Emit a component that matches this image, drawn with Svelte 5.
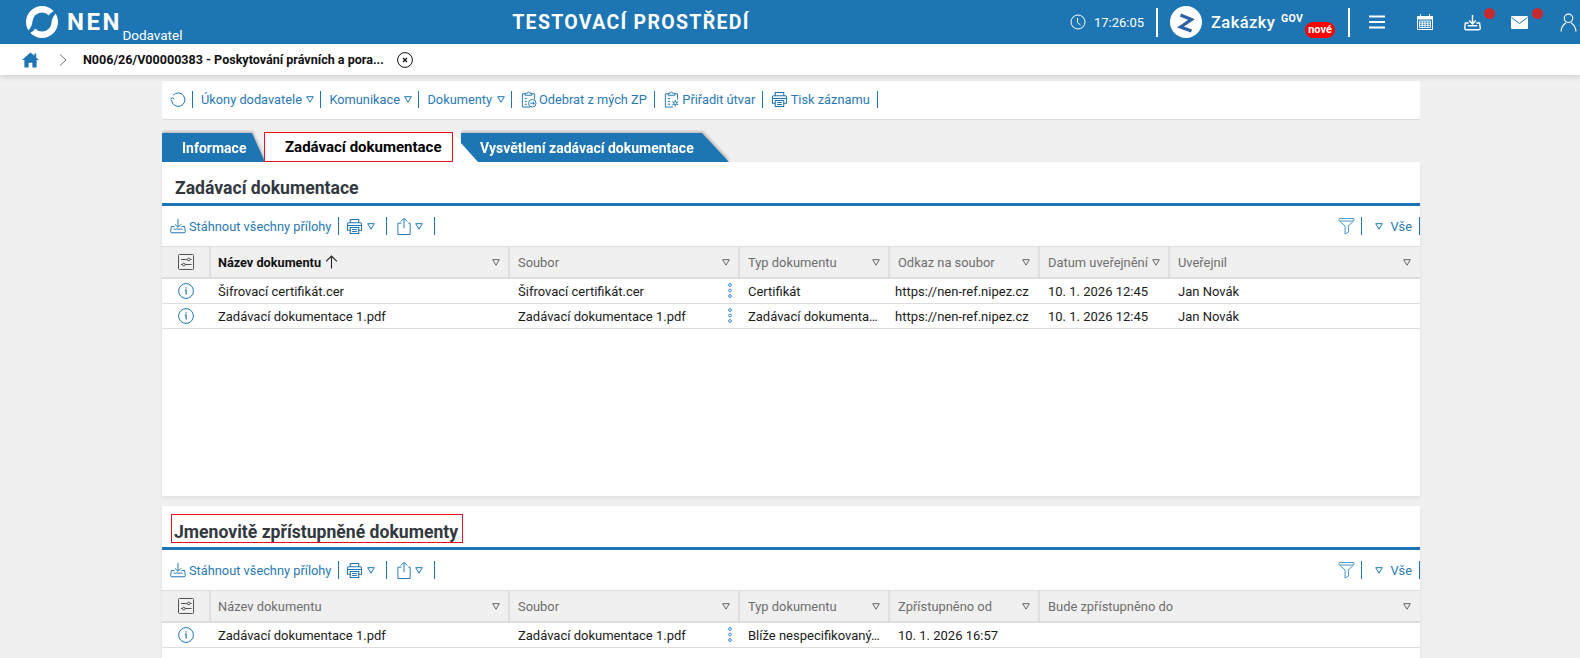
<script>
  const table1 = {
    cols: '47px 300px 230px 150px 150px 130px 1fr',
    head: ['Název dokumentu', 'Soubor', 'Typ dokumentu', 'Odkaz na soubor', 'Datum uveřejnění', 'Uveřejnil'],
    rows: [
      ['Šifrovací certifikát.cer', 'Šifrovací certifikát.cer', 'Certifikát', 'https://nen-ref.nipez.cz', '10. 1. 2026 12:45', 'Jan Novák'],
      ['Zadávací dokumentace 1.pdf', 'Zadávací dokumentace 1.pdf', 'Zadávací dokumenta…', 'https://nen-ref.nipez.cz', '10. 1. 2026 12:45', 'Jan Novák']
    ],
    sorted: true
  };
  const table2 = {
    cols: '47px 300px 230px 150px 150px 1fr',
    head: ['Název dokumentu', 'Soubor', 'Typ dokumentu', 'Zpřístupněno od', 'Bude zpřístupněno do'],
    rows: [
      ['Zadávací dokumentace 1.pdf', 'Zadávací dokumentace 1.pdf', 'Blíže nespecifikovaný…', '10. 1. 2026 16:57', '']
    ],
    sorted: false
  };
</script>

{#snippet tri()}
  <svg class="tri" viewBox="0 0 8 7" width="8" height="7"><path d="M.7.7h6.6L4 6.2z" fill="none" stroke="currentColor" stroke-width="1"/></svg>
{/snippet}

{#snippet printer(s = 17)}
  <svg viewBox="0 0 18 18" width={s} height={s} fill="none" stroke="#1d75b3" stroke-width="1.1"><path d="M4.5 5V1.5h9V5M4.5 13H1.5V6.5a1.500 1.500 0 0 1 1.500-1.500h12a1.500 1.500 0 0 1 1.500 1.500V13h-3"/><path d="M4.5 10h9v6.500h-9zM1.500 8h15M6.500 12.200h5M6.500 14.400h5"/></svg>
{/snippet}

{#snippet download(color = '#1d75b3', w = 1.1, s = 17)}
  <svg viewBox="0 0 18 18" width={s} height={s} fill="none" stroke={color} stroke-width={w}><path d="M9 1v9M5.500 7 9 10.500 12.500 7"/><path d="M5 9.500H1.500L.8 15a1.500 1.500 0 0 0 1.500 1.600h13.400a1.500 1.500 0 0 0 1.500-1.600l-.7-5.500H13M4 12.500h10"/></svg>
{/snippet}

{#snippet clipboard(kind)}
  <svg viewBox="0 0 18 18" width="17" height="17" fill="none" stroke="#1d75b3" stroke-width="1"><path d="M5.500 3H2.500v14h8M12.500 3h3v6"/><path d="M5.500 4.500V2.500h2a1.500 1.500 0 0 1 3 0h2v2z"/><path d="M5 8h2.500M5 11h2.500M5 14h2.500"/>
    {#if kind === 'remove'}<circle cx="13" cy="13" r="4" fill="#fff"/><path d="M10.800 13h4.400M13.500 11.500l1.700 1.500-1.700 1.500"/>{:else}<circle cx="13" cy="13" r="1.600"/><path d="M13 9.500v1.900M13 14.600v1.900M9.800 11.200l1.700 1M14.500 13.800l1.700 1M9.800 14.800l1.700-1M14.500 12.200l1.700-1"/>{/if}
  </svg>
{/snippet}

{#snippet panel(title, marked, t)}
  <section class="panel">
    <div class="ptitle"><h2 class:marked>{title}</h2></div>
    <div class="ptools">
      <a class="tl dlall">{@render download('#1d75b3', 1.1, 16)}<span>Stáhnout všechny přílohy</span></a><i class="sep"></i>
      <a class="tl small">{@render printer()}{@render tri()}</a><i class="sep"></i>
      <a class="tl small share">
        <svg viewBox="0 0 18 20" width="17" height="19" fill="none" stroke="#1d75b3" stroke-width="1"><path d="M5.500 6.500H2v12h13v-12h-2M8.500 12V1.500M5 4.800 8.500 1.300 12 4.800"/></svg>
        {@render tri()}</a><i class="sep"></i>
      <span class="grow"></span>
      <svg class="filter" viewBox="0 0 18 18" width="17" height="17" fill="none" stroke="#3a8cc8" stroke-width="1"><path d="M1 1.500a1 1 0 0 1 1-1h14a1 1 0 0 1 1 1c0 1.200-.6 1.700-1.500 2.500L11 8.500V15l-3.500 2V8.500L2.500 4C1.600 3.200 1 2.700 1 1.500zM2 3.200h14"/></svg>
      <i class="sep fsep"></i>
      <a class="tl all">{@render tri()}<span>Vše</span></a><i class="sep end"></i>
    </div>
    <div class="thead" style="grid-template-columns:{t.cols}">
      <div class="hcell first">
        <svg viewBox="0 0 16 16" width="16" height="16" fill="none" stroke="#555" stroke-width="1"><rect x=".5" y=".5" width="15" height="15" rx="1"/><path d="M3 5.500h6.500M12 5.500h1.500M3 10.500h1.500M7 10.500h6.500"/><circle cx="10.800" cy="5.500" r="1.300"/><circle cx="5.800" cy="10.500" r="1.300"/></svg>
      </div>
      {#each t.head as h, i}
        <div class="hcell" class:active={t.sorted && i === 0}>
          <span>{h}</span>
          {#if t.sorted && i === 0}
            <svg class="arrow" viewBox="0 0 12 13" width="13" height="14" fill="none" stroke="#222" stroke-width="1"><path d="M6 12.500V1M1 6l5-5 5 5"/></svg>
          {/if}
          <span class="grow"></span>
          <span class="htri">{@render tri()}</span>
        </div>
      {/each}
    </div>
    {#each t.rows as r}
      <div class="row" style="grid-template-columns:{t.cols}">
        <div class="cell info">
          <svg viewBox="0 0 16 16" width="16" height="16" fill="none" stroke="#1d75b3" stroke-width="1"><circle cx="8" cy="8" r="7.400"/><path d="M6.800 7.200h1.300v3c0 .6.300.9.800.9M8 4.200v1.200" stroke-width="1.200"/></svg>
        </div>
        {#each r as c, i}
          <div class="cell" class:lnk={t.head[i] === 'Odkaz na soubor'}>
            <span>{c}</span>
            {#if i === 1}
              <svg class="dots" viewBox="0 0 4 15" width="4" height="15" fill="none" stroke="#3b8ad0" stroke-width="1"><circle cx="2" cy="2" r="1.400"/><circle cx="2" cy="7.500" r="1.400"/><circle cx="2" cy="13" r="1.400"/></svg>
            {/if}
          </div>
        {/each}
      </div>
    {/each}
    <div class="pfill"></div>
  </section>
{/snippet}

<div class="page">
  <header class="top">
    <div class="logo">
      <svg viewBox="0 0 32 32" width="32" height="32">
        <circle cx="16" cy="16" r="16" fill="#fff"/>
        <circle cx="16" cy="16" r="9.500" fill="#1d75b3"/>
        <path fill="#1d75b3" d="M6.800 15C6 20 4 24 -1 27L.5 28.500C5.500 27 8.500 24.500 9.500 21.500zM25.200 17C26 12 28 8 33 5L31.500 3.500C26.500 5 23.500 7.500 22.500 10.500z"/>
      </svg>
      <b>NEN</b><span>Dodavatel</span>
    </div>
    <div class="env">TESTOVACÍ PROSTŘEDÍ</div>
    <div class="right">
      <svg class="clock" viewBox="0 0 16 16" width="16" height="16" fill="none" stroke="#fff" stroke-width="1"><circle cx="8" cy="8" r="7"/><path d="M7.500 4v4.500l3 2.500"/></svg>
      <span class="time">17:26:05</span>
      <i class="tsep s1"></i>
      <svg class="zlogo" viewBox="0 0 32 32" width="32" height="32"><circle cx="16" cy="16" r="16" fill="#fff"/><path d="M10.500 9 21.500 13.500 10.500 21 21.500 25" fill="none" stroke="#2b62a3" stroke-width="3.200"/></svg>
      <span class="zak">Zakázky<sup>GOV</sup><em>nové</em></span>
      <i class="tsep s2"></i>
      <svg class="ic menu" viewBox="0 0 16 14" width="16" height="14" fill="none" stroke="#fff" stroke-width="1.800"><path d="M0 1.500h16M0 7h16M0 12.500h16"/></svg>
      <svg class="ic cal" viewBox="0 0 16 16" width="16" height="16"><path fill="#fff" d="M0 2h3V0h1v2h8V0h1v2h3v14H0z"/><path fill="#1d75b3" d="M1 5.500h14V15H1z"/><path stroke="#fff" fill="none" d="M2.500 7h11v6.500h-11zM2.500 9.200h11M2.500 11.300h11M5.200 7v6.500M8 7v6.500M10.800 7v6.500" stroke-width=".9"/></svg>
      <span class="badged ic dl">{@render download('#fff', 1.5)}<u></u></span>
      <span class="badged ic mail">
        <svg viewBox="0 0 17 13" width="17" height="13"><rect width="17" height="13" rx="1" fill="#fff"/><path d="M.5 1.500l8 6 8-6" fill="none" stroke="#1d75b3" stroke-width="1"/></svg><u></u>
      </span>
      <svg class="ic user" viewBox="0 0 16 18" width="17" height="19" fill="none" stroke="#fff" stroke-width="1.100"><circle cx="8" cy="5" r="4"/><path d="M1 17.500c0-5 3-7 4.500-8M15 17.500c0-5-3-7-4.500-8"/></svg>
    </div>
  </header>
  <nav class="crumbs">
    <svg class="home" viewBox="0 0 18 16" width="17" height="16"><path fill="#1d75b3" d="M9 0 0 8h2.500v8h4.500v-5h4v5h4.500V8H18l-3-2.700V1h-2v2.500z"/></svg>
    <svg class="chev" viewBox="0 0 8 12" width="8" height="12" fill="none" stroke="#777" stroke-width="1"><path d="M1 .5l6 5.500-6 5.500"/></svg>
    <strong>N006/26/V00000383 - Poskytování právních a pora...</strong>
    <svg class="close" viewBox="0 0 16 16" width="16" height="16" fill="none" stroke="#111" stroke-width="1"><circle cx="8" cy="8" r="7.400"/><path d="M6 6l4 4M10 6l-4 4" stroke-width="1.300"/></svg>
  </nav>
  <main class="main">
    <div class="toolbar">
      <svg class="back" viewBox="0 0 16 16" width="16" height="16" fill="none" stroke="#1d75b3" stroke-width="1"><path d="M3.200 4.200A6.700 6.700 0 1 1 1.500 9M.5 8.500l1.700-2 2 1.700"/></svg>
      <i class="sep"></i>
      <a class="ti">Úkony dodavatele {@render tri()}</a><i class="sep"></i>
      <a class="ti">Komunikace {@render tri()}</a><i class="sep"></i>
      <a class="ti">Dokumenty {@render tri()}</a><i class="sep"></i>
      <a class="ti ico">{@render clipboard('remove')}Odebrat z mých ZP</a><i class="sep"></i>
      <a class="ti ico">{@render clipboard('assign')}Přiřadit útvar</a><i class="sep"></i>
      <a class="ti ico">{@render printer()}Tisk záznamu</a><i class="sep"></i>
    </div>
    <div class="tabs">
      <div class="tabw"><div class="tab t1">Informace</div></div>
      <div class="tab cur">Zadávací dokumentace</div>
      <div class="tabw w3"><div class="tab t3">Vysvětlení zadávací dokumentace</div></div>
    </div>
    {@render panel('Zadávací dokumentace', false, table1)}
    <div class="second">{@render panel('Jmenovitě zpřístupněné dokumenty', true, table2)}</div>
  </main>
</div>

<style>
  :global(body) { margin: 0; background: #f0f0f0; overflow: hidden; }
  .page { width: 1580px; height: 658px; overflow: hidden; font-family: Roboto, "Liberation Sans", sans-serif; font-size: 13px; color: #111; background: #f0f0f0; }
  a { color: #1d75b3; }
  i { font-style: normal; }
  svg { display: block; flex: none; }
  .grow { flex: 1; }

  .top { height: 44px; background: #1d75b3; color: #fff; display: grid; grid-template-columns: 400px 1fr 510px; align-items: center; position: relative; }
  .logo { display: flex; align-items: center; height: 44px; padding-left: 26px; }
  .logo b { font-size: 24px; font-weight: 700; letter-spacing: 2.500px; margin-left: 9px; margin-top: -1px; }
  .logo span { font-size: 13.500px; align-self: flex-end; margin-left: .5px; margin-bottom: 1px; }
  .env { position: absolute; left: 0; width: 1262px; text-align: center; font-size: 19.500px; font-weight: 700; letter-spacing: 1.300px; }
  .right { grid-column: 3; display: flex; align-items: center; height: 44px; }
  .time { font-size: 13px; margin-left: 8px; width: 48px; white-space: nowrap; }
  .tsep { width: 2px; height: 29px; background: #fff; }
  .s1 { margin-left: 14px; }
  .zlogo { margin-left: 11.500px; }
  .zak { position: relative; font-size: 16.500px; font-weight: 500; margin-left: 9.500px; width: 137px; letter-spacing: .4px; }
  .zak sup { font-size: 10.500px; font-weight: 700; position: absolute; left: 70px; top: 0; line-height: 12px; }
  .zak em { position: absolute; left: 94px; top: 9px; width: 30px; height: 16px; border-radius: 8px; background: #f00; font-style: normal; font-size: 11px; font-weight: 700; text-align: center; line-height: 16px; letter-spacing: 0; }
  .menu { margin-left: 19px; }
  .cal { margin-left: 32px; }
  .badged { position: relative; display: block; }
  .badged u { position: absolute; width: 11px; height: 11px; border-radius: 50%; background: #c62a2f; }
  .dl { margin-left: 31px; }
  .dl u { left: 20px; top: -6px; }
  .mail { margin-left: 30px; }
  .mail u { left: 21px; top: -8px; }
  .user { margin-left: 32px; }

  .crumbs { height: 31px; background: #fff; display: flex; align-items: center; box-shadow: 0 2px 6px rgba(0,0,0,.14); position: relative; }
  .home { margin-left: 22px; }
  .chev { margin-left: 20px; }
  .crumbs strong { font-size: 12.550px; font-weight: 700; margin-left: 16px; white-space: nowrap; }
  .close { margin-left: 13px; }

  .main { width: 1258px; margin: 0 0 0 162px; display: flex; flex-direction: column; }
  .toolbar { margin-top: 6px; height: 36px; padding-bottom: 2px; background: #fff; border-bottom: 1px solid #ddd; display: flex; align-items: center; padding-left: 8px; }
  .toolbar .sep { margin: 0 8px 0 6px; }
  .toolbar .ti.ico + .sep { margin-left: 7px; }
  .ti { display: flex; align-items: center; gap: 4.500px; font-size: 12.800px; white-space: nowrap; color: #2a79b5; }
  .ti.ico { gap: 2.500px; }
  .sep { display: block; width: 1px; height: 17px; background: #1d75b3; flex: none; }
  .tri { color: #1d75b3; }

  .tabs { display: flex; height: 30px; margin-top: 12px; align-items: flex-end; }
  .tabw { filter: drop-shadow(1.500px -1.500px 1px rgba(0,0,0,.2)); }
  .tab { height: 29px; display: flex; align-items: center; font-weight: 700; font-size: 14px; box-sizing: border-box; color: #fff; background: #1d75b3; white-space: nowrap; }
  .t1 { width: 103px; padding-left: 20px; clip-path: polygon(0 0, 90px 0, 103px 29px, 0 29px); }
  .cur { position: relative; width: 189px; height: 30px; margin-left: -1px; background: #fff; color: #000; border: 1px solid #e8121e; font-size: 15px; padding-left: 20px; }
  .cur::after { content: ""; position: absolute; left: calc(100% + 1px); bottom: -1px; width: 26px; height: 29px; background: #fff; clip-path: polygon(0 0, 100% 100%, 0 100%); }
  .w3 { margin-left: 8px; position: relative; }
  .t3 { width: 268px; padding-left: 19px; clip-path: polygon(0 0, 241px 0, 268px 29px, 17px 29px, 0 10px); }

  .panel { background: #fff; display: flex; flex-direction: column; box-shadow: 0 2px 4px rgba(0,0,0,.07); height: 334px; }
  .ptitle { height: 37px; padding-top: 4px; border-bottom: 3px solid #1d75b3; display: flex; align-items: center; padding-left: 12px; }
  h2 { margin: 0; height: 23px; padding-top: 4px; font-size: 17.600px; font-weight: 700; color: #33383f; line-height: 27px; white-space: nowrap; border: 1px solid transparent; }
  h2.marked { width: 288px; border-color: #e8121e; margin-left: -3px; padding-left: 2px; }
  .ptools { height: 40px; display: flex; align-items: center; padding-left: 8px; }
  .ptools .sep { height: 18px; }
  .tl { display: flex; align-items: center; gap: 2px; font-size: 12.800px; color: #2a79b5; white-space: nowrap; }
  .dlall { gap: 3px; }
  .tl + .sep { margin: 0 7px 0 7px; }
  .tl.small { gap: 4px; }
  .tl.small + .sep { margin-left: 11px; margin-right: 9px; }
  .tl.share { gap: 2px; }
  .tl.share + .sep { margin: 0; }
  .ptools .fsep { margin: 0 13px 0 6px; }
  .tl.all { gap: 7px; }
  .ptools .tl.all + .sep { margin: 0 0 0 7px; }
  .tl.share { margin-right: 11px; }

  .thead, .row { display: grid; }
  .thead { background: #f0f0f0; border-top: 1px solid #ddd; border-bottom: 2px solid #ddd; height: 30px; }
  .hcell { display: flex; align-items: center; margin-left: -1px; padding-left: 8px; padding-right: 9px; color: #6e6e6e; font-size: 12.900px; border-left: 2px solid #e0e0e0; min-width: 0; white-space: nowrap; }
  .hcell.first { margin-left: 0; border-left: none; justify-content: center; padding: 0; }
  .hcell.first + .hcell { margin-left: 0; padding-left: 7px; }
  .hcell.active { color: #111; font-weight: 700; font-size: 12.700px; }
  .arrow { margin-left: 4px; }
  .htri .tri { color: #666; }
  .row { height: 24px; border-bottom: 1px solid #ddd; }
  .cell { display: flex; align-items: center; padding-left: 9px; font-size: 13px; white-space: nowrap; position: relative; min-width: 0; color: #1b1b1b; }
  .cell.info { justify-content: center; padding: 0; }
  .cell.lnk { padding-left: 6px; }
  .dots { position: absolute; right: 7px; top: 4px; }
  .pfill { flex: 1; }
  .second { margin-top: 10px; }
</style>
